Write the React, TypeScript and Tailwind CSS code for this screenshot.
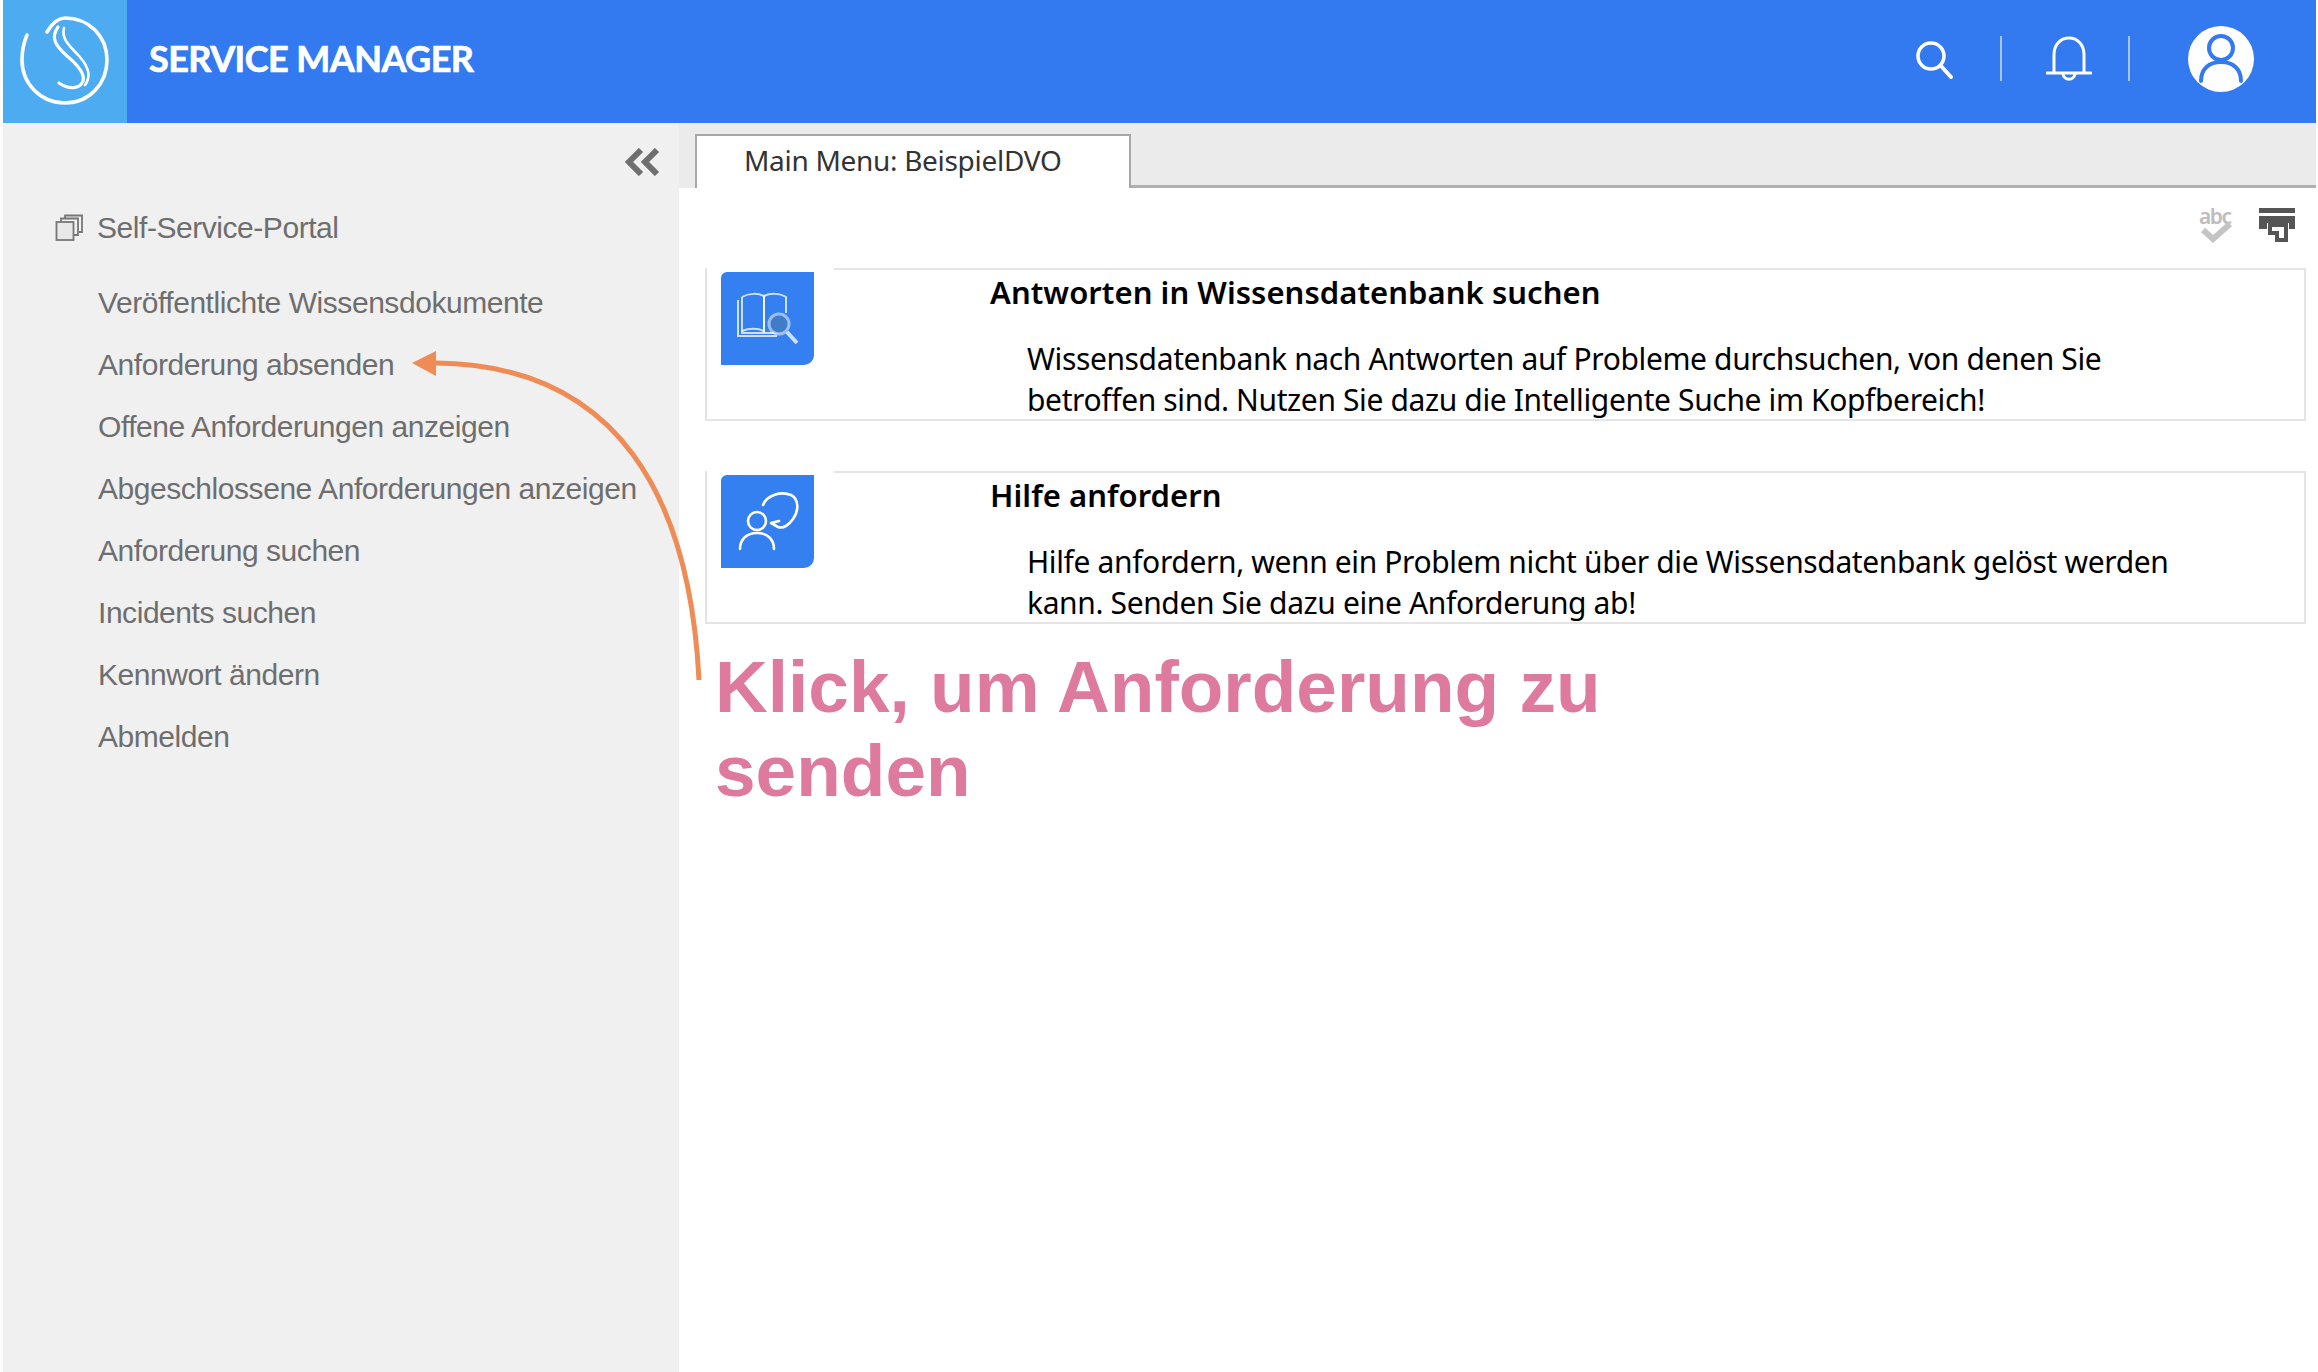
const menuItems = [
  'Veröffentlichte Wissensdokumente',
  'Anforderung absenden',
  'Offene Anforderungen anzeigen',
  'Abgeschlossene Anforderungen anzeigen',
  'Anforderung suchen',
  'Incidents suchen',
  'Kennwort ändern',
  'Abmelden',
];

function Logo() {
  return (
    <svg width="92" height="92" viewBox="0 0 92 92" fill="none" stroke="white" strokeLinecap="round">
      <path d="M28 18 C34 8 40 4 46 4 C70 4 88 22 88 46 C88 70 70 89 46 89 C22 89 3 70 3 46 C3 36 5 28 8 21" strokeWidth="3.6" />
      <path d="M39 13 C31 24 37 32 48 42 C60 52 66 60 64 67 C61 75 50 76 40 69" strokeWidth="3.2" />
      <path d="M45 14 C42 26 52 33 60 42 C70 53 72 63 66 71" strokeWidth="2.6" />
    </svg>
  );
}

function SearchIcon() {
  return (
    <svg width="40" height="40" viewBox="0 0 40 40" fill="none" stroke="white" strokeWidth="3.5" strokeLinecap="round">
      <circle cx="17" cy="17" r="13" />
      <path d="M27 27 L37 38" strokeWidth="4" />
    </svg>
  );
}

function BellIcon() {
  return (
    <svg width="46" height="46" viewBox="0 0 46 46" fill="none" stroke="white" strokeWidth="3" strokeLinecap="round">
      <path d="M8 36 V19 C8 9 14 2 23 2 C32 2 38 9 38 19 V36" />
      <path d="M1 37 H45" />
      <path d="M17 38 C18 45 28 45 29 38" />
    </svg>
  );
}

function AvatarIcon() {
  return (
    <svg width="66" height="66" viewBox="0 0 66 66" fill="none">
      <circle cx="33" cy="33" r="33" fill="white" />
      <circle cx="33" cy="22" r="12" stroke="#3379f0" strokeWidth="4" />
      <path d="M13 55 C13 43 21 36 33 36 C45 36 53 43 53 55" stroke="#3379f0" strokeWidth="4" strokeLinecap="round" />
    </svg>
  );
}

function PagesIcon() {
  return (
    <svg width="28" height="28" viewBox="0 0 28 28" fill="none" stroke="#777" strokeWidth="1.8">
      <rect x="1.5" y="8" width="17" height="18" fill="#e8e8e8" />
      <path d="M6 7 V4.5 H23 V21 H19" />
      <path d="M10 4 V1.5 H27 V18 H24" />
    </svg>
  );
}

function CollapseIcon() {
  return (
    <svg width="36" height="28" viewBox="0 0 36 28" fill="none" stroke="#6f6f6f" strokeWidth="6">
      <path d="M17 2 L5 14 L17 26" />
      <path d="M33 2 L21 14 L33 26" />
    </svg>
  );
}

function PrintIcon() {
  return (
    <svg width="36" height="34" viewBox="0 0 36 34" fill="#555">
      <rect x="0" y="0" width="36" height="5" />
      <path d="M0 8 H36 V21 H30 V15 H8 V21 H0 Z" />
      <path d="M9 15 H29 V34 H16 V27 H9 Z M13 19 V23 H20 V30 H25 V19 Z" />
    </svg>
  );
}

function SpellIcon() {
  return (
    <div className="relative h-[38px] w-[34px] text-[#bdbdbd]">
      <span className="block text-[21px] leading-[20px] font-semibold font-['Noto_Sans',sans-serif] tracking-[-1.5px]">abc</span>
      <svg className="absolute left-0 top-[14px]" width="34" height="24" viewBox="0 0 34 24" fill="none" stroke="#c4c4c4" strokeWidth="6">
        <path d="M4 10 L14 19 L31 4" />
      </svg>
    </div>
  );
}

function BookIcon() {
  return (
    <svg width="62" height="56" viewBox="0 0 62 56" fill="none" stroke="white" strokeOpacity="0.75" strokeWidth="2">
      <path d="M5 6 V42 H44" />
      <path d="M1 9 V45 H40" />
      <path d="M5 6 C12 2 21 2 27 5 V40 C21 37 12 37 5 40" />
      <path d="M27 5 C33 2 43 2 49 6 V22" />
      <path d="M27 5 V42" />
      <circle cx="42" cy="33" r="10" fill="#3f7dc8" strokeOpacity="0.5" strokeWidth="3" />
      <path d="M50 41 L60 52" strokeWidth="4" />
    </svg>
  );
}

function HelpIcon() {
  return (
    <svg width="62" height="62" viewBox="0 0 62 62" fill="none" stroke="white" strokeWidth="2.6" strokeLinecap="round" strokeLinejoin="round">
      <circle cx="20" cy="30" r="9" />
      <path d="M3 58 C3 48 10 42 20 42 C30 42 37 48 37 58" />
      <path d="M26 14 C30 4 44 0 54 4 C62 8 62 20 56 28 C52 34 46 38 41 36 L34 32 L42 30" />
    </svg>
  );
}

function InfoCard({ icon, title, lines }: { icon: React.ReactNode; title: string; lines: string[] }) {
  return (
    <div className="relative flex h-[153px] border-x-2 border-b-2 border-[#e4e4e4]">
      {/* top rule stops short of the icon */}
      <div className="absolute left-[127px] right-[-2px] top-0 h-[2px] bg-[#e4e4e4]" />
      <div className="flex w-[110px] shrink-0 pl-[14px] pt-[4px]">
        <div className="flex h-[93px] w-[93px] items-center justify-center rounded-tl-[6px] rounded-br-[10px] bg-[#3580f0]">
          {icon}
        </div>
      </div>
      <div className="ml-[173px] pt-[6px] text-black font-['Noto_Sans',sans-serif]">
        <h3 className="text-[31px] leading-[36px] font-semibold tracking-[0.05px]">{title}</h3>
        <div className="ml-[37px] mt-[28px] text-[30px] leading-[41px] tracking-[-0.37px] whitespace-nowrap">
          {lines.map((line) => (
            <p key={line}>{line}</p>
          ))}
        </div>
      </div>
    </div>
  );
}

export default function App() {
  return (
    <div className="relative h-[1372px] w-[2318px] overflow-hidden bg-white pl-[3px] pr-[2px] font-['Liberation_Sans',sans-serif]">
      <header className="flex h-[123px] items-center bg-[#3379f0] pb-[6px]">
        <div className="-mb-[6px] flex h-[123px] w-[124px] items-center justify-center bg-[#4dabf2] pb-[3px]">
          <Logo />
        </div>
        <h1 className="mb-[2px] ml-[22px] text-[36px] font-bold tracking-[-0.55px] text-white font-['Lato',sans-serif] [-webkit-text-stroke:0.7px_white]">SERVICE MANAGER</h1>
        <div className="ml-auto flex items-center pr-[62px]">
          <SearchIcon />
          <div className="ml-[46px] h-[45px] w-[2px] bg-[#a9c4e8]" />
          <div className="ml-[44px]"><BellIcon /></div>
          <div className="ml-[36px] h-[45px] w-[2px] bg-[#a9c4e8]" />
          <div className="ml-[58px]"><AvatarIcon /></div>
        </div>
      </header>

      <div className="flex h-[1249px]">
        <aside className="w-[676px] shrink-0 bg-[#f0f0f0] text-[#6e6e6e]">
          <div className="flex justify-end pr-[19px] pt-[25px]">
            <CollapseIcon />
          </div>
          <div className="mt-[34px] flex items-center pl-[52px]">
            <PagesIcon />
            <span className="ml-[14px] text-[30px] leading-[36px] tracking-[-0.45px]">Self-Service-Portal</span>
          </div>
          <nav className="mt-[39px] flex flex-col gap-[26px] pl-[95px]">
            {menuItems.map((item) => (
              <a key={item} className="text-[30px] leading-[36px] tracking-[-0.45px] whitespace-nowrap">{item}</a>
            ))}
          </nav>
        </aside>

        <main className="flex-1 min-w-0">
          <div className="flex h-[65px] items-end bg-[#ebebeb] pl-[16px]">
            <div className="flex h-[54px] w-[436px] shrink-0 items-center border-x-2 border-t-2 border-[#a8a8a8] bg-white pb-[5px] pl-[47px] text-[28px] tracking-[-0.3px] text-[#333] font-['Noto_Sans',sans-serif]">
              Main Menu: BeispielDVO
            </div>
            <div className="h-[3px] flex-1 bg-[#b0b0b0]" />
          </div>
          <div className="flex h-[80px] items-center justify-end gap-[26px] pb-[6px] pr-[21px]">
            <SpellIcon />
            <PrintIcon />
          </div>
          <div className="flex flex-col gap-[50px] pl-[26px] pr-[10px]">
            <InfoCard
              icon={<BookIcon />}
              title="Antworten in Wissensdatenbank suchen"
              lines={[
                'Wissensdatenbank nach Antworten auf Probleme durchsuchen, von denen Sie',
                'betroffen sind. Nutzen Sie dazu die Intelligente Suche im Kopfbereich!',
              ]}
            />
            <InfoCard
              icon={<HelpIcon />}
              title="Hilfe anfordern"
              lines={[
                'Hilfe anfordern, wenn ein Problem nicht über die Wissensdatenbank gelöst werden',
                'kann. Senden Sie dazu eine Anforderung ab!',
              ]}
            />
          </div>
          <p className="ml-[36px] mt-[21px] w-[1000px] text-[73px] leading-[84px] font-bold text-[#de7a9e]">
            Klick, um Anforderung zu senden
          </p>
        </main>
      </div>

      {/* annotation arrow drawn over sidebar and content */}
      <svg className="pointer-events-none absolute left-0 top-0" width="2318" height="1372" fill="none">
        <path d="M699 680 C690 500 620 365 436 363" stroke="#ef8c55" strokeWidth="5" />
        <path d="M412 363 L436 351 L436 376 Z" fill="#ef8c55" />
      </svg>
    </div>
  );
}
